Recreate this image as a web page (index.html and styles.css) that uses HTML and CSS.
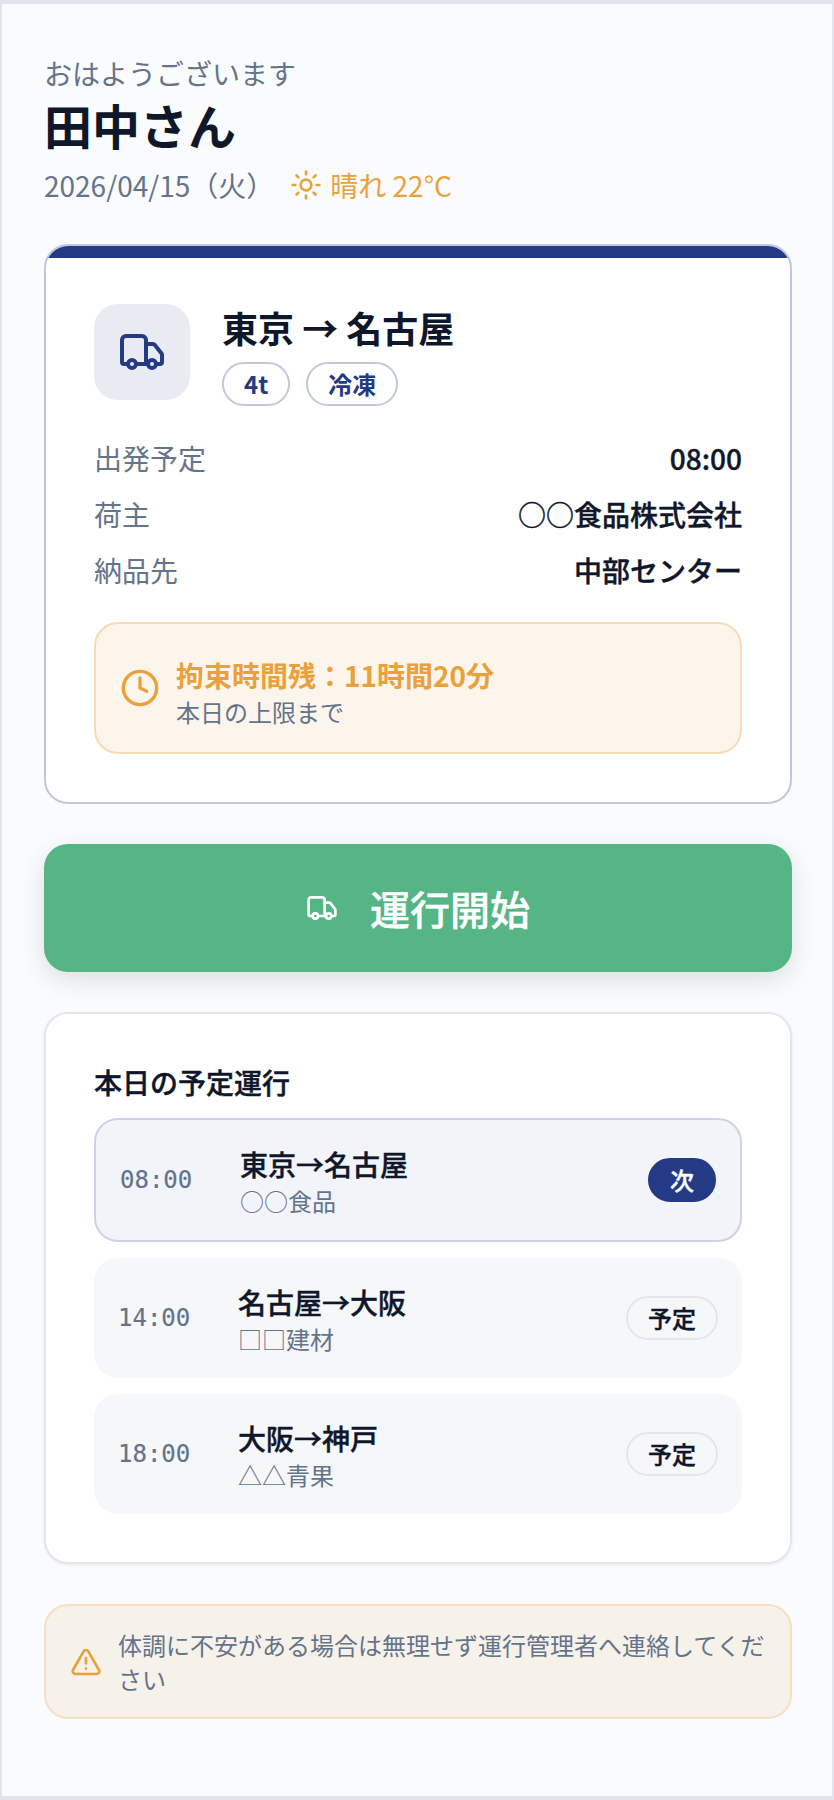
FILE: index.html
```html
<!DOCTYPE html>
<html lang="ja">
<head>
  <meta charset="UTF-8">
  <meta name="viewport" content="width=device-width, initial-scale=1.0">
  <title>ドライバーホーム</title>
  <link rel="stylesheet" href="styles.css">
</head>
<body>
  <div class="screen">
    <header class="head">
      <div class="greeting">おはようございます</div>
      <h1 class="name">田中さん</h1>
      <div class="meta">
        <span>2026/04/15（火）</span>
        <span class="weather">
          <svg class="sun" viewBox="0 0 24 24" fill="none" stroke="currentColor" stroke-width="2" stroke-linecap="round">
            <circle cx="12" cy="12" r="4"/>
            <path d="M12 2v2M12 20v2M4.9 4.9l1.4 1.4M17.7 17.7l1.4 1.4M2 12h2M20 12h2M6.3 17.7l-1.4 1.4M19.1 4.9l-1.4 1.4"/>
          </svg>
          晴れ 22°C
        </span>
      </div>
    </header>

    <section class="card trip">
      <div class="trip-top">
        <div class="trip-icon">
          <svg class="truck" viewBox="0 0 24 24" fill="none" stroke="currentColor" stroke-width="2" stroke-linecap="round" stroke-linejoin="round">
            <path d="M14 18V6a2 2 0 0 0-2-2H4a2 2 0 0 0-2 2v11a1 1 0 0 0 1 1h2"/>
            <path d="M15 18H9"/>
            <path d="M19 18h2a1 1 0 0 0 1-1v-3.65a1 1 0 0 0-.22-.62l-3.48-4.35A1 1 0 0 0 17.52 8H14"/>
            <circle cx="17" cy="18" r="2"/>
            <circle cx="7" cy="18" r="2"/>
          </svg>
        </div>
        <div>
          <div class="route">東京 → 名古屋</div>
          <div class="tags">
            <span class="tag">4t</span>
            <span class="tag">冷凍</span>
          </div>
        </div>
      </div>

      <div class="rows">
        <div class="row"><span class="row-label">出発予定</span><span class="row-value">08:00</span></div>
        <div class="row"><span class="row-label">荷主</span><span class="row-value">○○食品株式会社</span></div>
        <div class="row"><span class="row-label">納品先</span><span class="row-value">中部センター</span></div>
      </div>

      <div class="limit">
        <svg class="clock" viewBox="0 0 24 24" fill="none" stroke="currentColor" stroke-width="2" stroke-linecap="round" stroke-linejoin="round">
          <circle cx="12" cy="12" r="10"/>
          <path d="M12 6v6l4 2"/>
        </svg>
        <div>
          <div class="limit-title">拘束時間残：11時間20分</div>
          <div class="limit-sub">本日の上限まで</div>
        </div>
      </div>
    </section>

    <button class="start">
      <svg class="start-icon" viewBox="0 0 24 24" fill="none" stroke="currentColor" stroke-width="2" stroke-linecap="round" stroke-linejoin="round">
        <path d="M14 18V6a2 2 0 0 0-2-2H4a2 2 0 0 0-2 2v11a1 1 0 0 0 1 1h2"/>
        <path d="M15 18H9"/>
        <path d="M19 18h2a1 1 0 0 0 1-1v-3.65a1 1 0 0 0-.22-.62l-3.48-4.35A1 1 0 0 0 17.52 8H14"/>
        <circle cx="17" cy="18" r="2"/>
        <circle cx="7" cy="18" r="2"/>
      </svg>
      運行開始
    </button>

    <section class="card plan">
      <h2 class="plan-title">本日の予定運行</h2>
      <div class="plan-item next">
        <span class="time">08:00</span>
        <div class="info">
          <div class="info-route">東京→名古屋</div>
          <div class="info-sub">○○食品</div>
        </div>
        <span class="badge badge-next">次</span>
      </div>
      <div class="plan-item">
        <span class="time">14:00</span>
        <div class="info">
          <div class="info-route">名古屋→大阪</div>
          <div class="info-sub">□□建材</div>
        </div>
        <span class="badge">予定</span>
      </div>
      <div class="plan-item">
        <span class="time">18:00</span>
        <div class="info">
          <div class="info-route">大阪→神戸</div>
          <div class="info-sub">△△青果</div>
        </div>
        <span class="badge">予定</span>
      </div>
    </section>

    <div class="notice">
      <svg class="warn" viewBox="0 0 24 24" fill="none" stroke="currentColor" stroke-width="2" stroke-linecap="round" stroke-linejoin="round">
        <path d="M21.73 18l-8-14a2 2 0 0 0-3.48 0l-8 14A2 2 0 0 0 4 21h16a2 2 0 0 0 1.73-3"/>
        <path d="M12 9v4"/>
        <path d="M12 17h.01"/>
      </svg>
      <p class="notice-text">体調に不安がある場合は無理せず運行管理者へ連絡してください</p>
    </div>
  </div>
</body>
</html>
```

FILE: styles.css
```css
* {
  box-sizing: border-box;
}
body {
  margin: 0;
  padding: 4px 0 4px 2px;
  height: 1800px;
  background: #e2e4ec;
  font-family: "Noto Sans CJK JP", "Noto Sans", sans-serif;
  color: #0f172a;
}
.screen {
  height: 1792px;
  margin-right: 2px;
  padding: 48px 40px 0 42px;
  background: #fafbfc;
}
.greeting {
  font-size: 28px;
  line-height: 42px;
  color: #64748b;
}
.name {
  margin: 0;
  font-size: 48px;
  line-height: 60px;
  font-weight: 700;
}
.meta {
  display: flex;
  align-items: center;
  gap: 16px;
  margin-top: 10px;
  font-size: 28px;
  line-height: 42px;
  color: #64748b;
}
.weather {
  display: flex;
  align-items: center;
  gap: 8px;
  color: #e9a23b;
}
.sun {
  width: 32px;
  height: 32px;
}
.card {
  background: #fff;
  border-radius: 24px;
}
.trip {
  margin-top: 38px;
  padding: 0 48px 48px;
  border: 2px solid #c0c8e0;
  overflow: hidden;
}
.trip::before {
  content: "";
  display: block;
  height: 12px;
  margin: 0 -48px;
  background: #243a85;
}
.trip-top {
  display: flex;
  align-items: flex-start;
  gap: 32px;
  margin-top: 46px;
}
.trip-icon {
  display: flex;
  align-items: center;
  justify-content: center;
  width: 96px;
  height: 96px;
  border-radius: 24px;
  background: #e9ebf3;
  color: #243a85;
}
.truck {
  width: 48px;
  height: 48px;
}
.route {
  font-size: 36px;
  line-height: 46px;
  font-weight: 700;
}
.tags {
  display: flex;
  gap: 16px;
  margin-top: 12px;
}
.tag {
  padding: 0 20px;
  height: 44px;
  border: 2px solid #c0c8e0;
  border-radius: 22px;
  font-size: 24px;
  line-height: 40px;
  font-weight: 600;
  color: #243a85;
}
.rows {
  margin-top: 24px;
}
.row {
  display: flex;
  justify-content: space-between;
  align-items: center;
  height: 56px;
  font-size: 28px;
}
.row-label {
  color: #64748b;
}
.row-value {
  font-weight: 500;
  -webkit-text-stroke: 0.4px;
}
.limit {
  display: flex;
  align-items: center;
  gap: 16px;
  margin-top: 24px;
  padding: 23px 24px;
  border: 2px solid #f6dcb5;
  border-radius: 24px;
  background: #fcf5ec;
}
.clock {
  width: 40px;
  height: 40px;
  color: #e9a23b;
}
.limit-title {
  margin-top: 8px;
  font-size: 28px;
  line-height: 40px;
  font-weight: 700;
  color: #e9a23b;
}
.limit-sub {
  font-size: 24px;
  line-height: 34px;
  color: #64748b;
}
.start {
  display: flex;
  align-items: center;
  justify-content: center;
  gap: 32px;
  width: 100%;
  height: 128px;
  margin-top: 40px;
  border: none;
  border-radius: 24px;
  background: #56b585;
  color: #fff;
  font-family: inherit;
  font-size: 40px;
  font-weight: 500;
  -webkit-text-stroke: 0.4px;
  box-shadow: 0 8px 24px rgba(15, 23, 42, 0.12);
}
.start-icon {
  width: 32px;
  height: 32px;
}
.plan {
  margin-top: 40px;
  padding: 48px;
  border: 2px solid #e2e6ee;
  box-shadow: 0 1px 3px rgba(15, 23, 42, 0.08);
}
.plan-title {
  margin: 0;
  font-size: 28px;
  line-height: 40px;
  font-weight: 500;
  -webkit-text-stroke: 0.4px;
}
.plan-item {
  display: flex;
  align-items: center;
  gap: 24px;
  margin-top: 16px;
  padding: 23px 24px;
  border-radius: 24px;
  background: #f6f7f9;
}
.plan-item.next {
  border: 2px solid #cdd2e4;
  background: #f3f4f9;
}
.time {
  width: 96px;
  font-family: "DejaVu Sans Mono", monospace;
  font-size: 24px;
  color: #64748b;
  -webkit-text-stroke: 0.2px;
}
.info {
  flex: 1;
}
.info-route {
  font-size: 28px;
  line-height: 42px;
  font-weight: 500;
  -webkit-text-stroke: 0.4px;
}
.info-sub {
  font-size: 24px;
  line-height: 32px;
  color: #64748b;
}
.badge {
  padding: 0 20px;
  height: 44px;
  border: 2px solid #e2e6ee;
  border-radius: 22px;
  font-size: 24px;
  line-height: 40px;
  font-weight: 500;
  -webkit-text-stroke: 0.4px;
}
.badge-next {
  border-color: #243a85;
  background: #243a85;
  color: #fff;
}
.notice {
  display: flex;
  align-items: center;
  gap: 16px;
  margin-top: 40px;
  padding: 22px 24px;
  border: 2px solid #f6dfc2;
  border-radius: 24px;
  background: #f6f1e9;
}
.warn {
  flex: none;
  width: 32px;
  height: 32px;
  color: #e9a23b;
}
.notice-text {
  margin: 0;
  font-size: 24px;
  line-height: 1.4;
  color: #64748b;
}
```
